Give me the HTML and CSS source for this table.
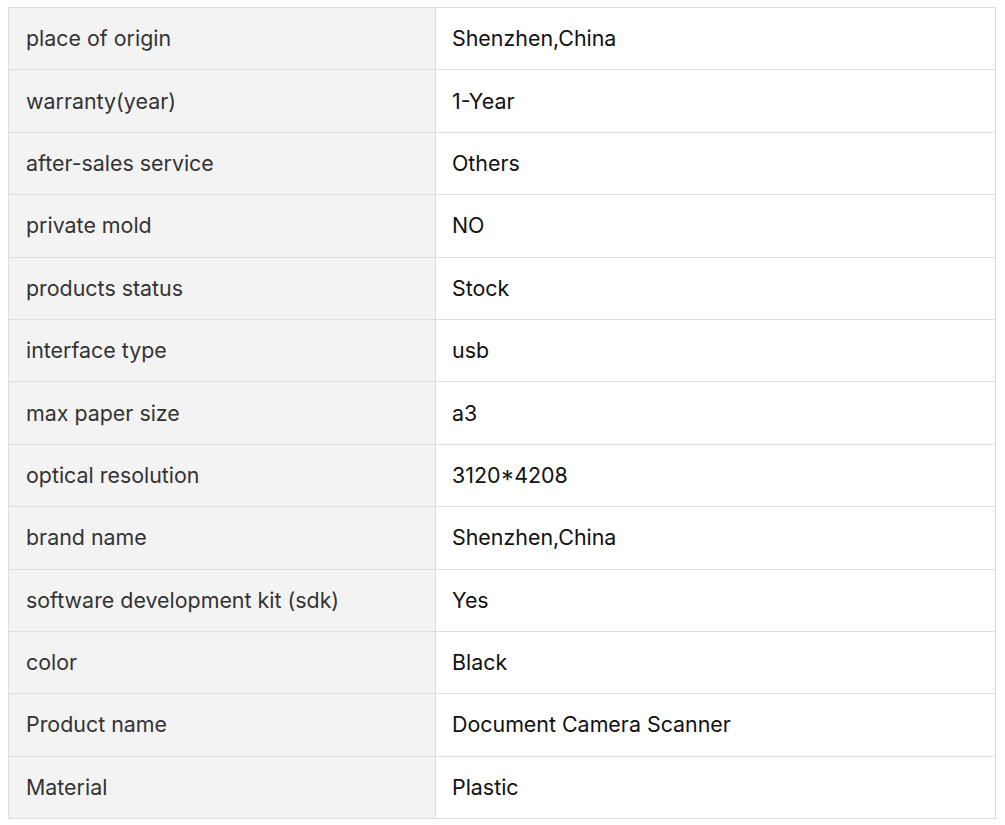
FILE: index.html
```html
<!DOCTYPE html>
<html>
<head>
<meta charset="utf-8">
<link rel="stylesheet" href="styles.css">
</head>
<body>
<table class="spec">
<tbody>
<tr><td class="k">place of origin</td><td class="v">Shenzhen,China</td></tr>
<tr><td class="k">warranty(year)</td><td class="v">1-Year</td></tr>
<tr><td class="k">after-sales service</td><td class="v">Others</td></tr>
<tr><td class="k">private mold</td><td class="v">NO</td></tr>
<tr><td class="k">products status</td><td class="v">Stock</td></tr>
<tr><td class="k">interface type</td><td class="v">usb</td></tr>
<tr><td class="k">max paper size</td><td class="v">a3</td></tr>
<tr><td class="k">optical resolution</td><td class="v">3120*4208</td></tr>
<tr><td class="k">brand name</td><td class="v">Shenzhen,China</td></tr>
<tr><td class="k">software development kit (sdk)</td><td class="v">Yes</td></tr>
<tr><td class="k">color</td><td class="v">Black</td></tr>
<tr><td class="k">Product name</td><td class="v">Document Camera Scanner</td></tr>
<tr><td class="k">Material</td><td class="v">Plastic</td></tr>
</tbody>
</table>
</body>
</html>
```
FILE: styles.css
```css
html, body {
  margin: 0;
  background: #fff;
}
body {
  padding: 7px 9px 0 8px;
  font-family: Inter, "Noto Sans", sans-serif;
}
.spec {
  width: 988px;
  border-collapse: collapse;
  table-layout: fixed;
}
.spec td {
  border: 1px solid #dddddd;
  height: 60.4px;
  padding: 0 16px 1px 16px;
  font-size: 21.4px;
  line-height: 26px;
  vertical-align: middle;
}
.spec td.k {
  width: 393px;
  padding-left: 17px;
  background: #f3f3f3;
  color: #333333;
}
.spec td.v {
  background: #ffffff;
  color: #111111;
}
```
